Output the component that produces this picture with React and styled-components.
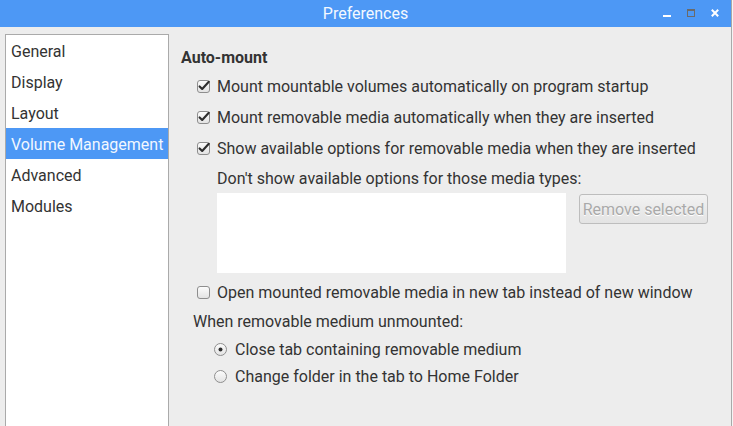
import React from "react";
import styled, { createGlobalStyle } from "styled-components";

const Global = createGlobalStyle`
  html, body { margin: 0; padding: 0; }
  body {
    width: 733px; height: 426px; overflow: hidden;
    background: #f4f4f4;
    font-family: Roboto, "Noto Sans", sans-serif;
  }
`;

const Window = styled.div`
  width: 731px;
  height: 426px;
  display: flex;
  flex-direction: column;
  background: #ededed;
  border-right: 1px solid #a9a9a9;
  overflow: hidden;
`;

const TitleBar = styled.div`
  height: 27px;
  flex: none;
  background: #4d98f5;
  position: relative;
  display: flex;
  align-items: center;
  justify-content: center;
  color: #f4f8ff;
  font-size: 16px;
`;

const Controls = styled.div`
  position: absolute;
  right: 12px;
  top: 9px;
  display: flex;
  align-items: flex-start;
  gap: 16px;
  & > svg { display: block; }
`;

const Body = styled.div`
  flex: 1;
  display: flex;
  padding: 7px 0 0 5px;
  gap: 12px;
  min-height: 0;
`;

const Sidebar = styled.div`
  width: 162px;
  flex: none;
  background: #fff;
  border: 1px solid #aaa;
  border-bottom: none;
  display: flex;
  flex-direction: column;
`;

const SideItem = styled.div`
  height: 31px;
  line-height: 33px;
  padding-left: 5px;
  font-size: 16px;
  color: ${(p) => (p.$active ? "#f2f7ff" : "#333")};
  background: ${(p) => (p.$active ? "#4d98f5" : "transparent")};
  white-space: nowrap;
`;

const Content = styled.div`
  flex: 1;
  display: flex;
  flex-direction: column;
  padding-top: 8px;
  color: #333;
  font-size: 16px;
`;

const Heading = styled.div`
  font-weight: bold;
  height: 29px;
  line-height: 32px;
`;

const Row = styled.div`
  display: flex;
  align-items: center;
  height: ${(p) => p.$h || 31}px;
  padding-left: ${(p) => p.$indent || 0}px;
  gap: ${(p) => p.$gap || 7}px;
  white-space: nowrap;
`;

const Label = styled.div`
  height: ${(p) => p.$h}px;
  line-height: ${(p) => p.$h}px;
  padding-left: ${(p) => p.$indent || 0}px;
  white-space: nowrap;
`;

const ListArea = styled.div`
  display: flex;
  gap: 13px;
  padding-left: 36px;
  align-items: flex-start;
`;

const ListBox = styled.div`
  width: 349px;
  height: 80px;
  background: #fff;
`;

const Button = styled.div`
  width: 127px;
  height: 28px;
  margin-top: 1px;
  border: 1px solid #bdbdbd;
  border-radius: 3px;
  background: linear-gradient(#f2f2f2, #e3e3e3);
  color: #a9a9a9;
  text-shadow: 0 1px 0 #fff;
  font-size: 16px;
  display: flex;
  align-items: center;
  justify-content: center;
  white-space: nowrap;
`;

const Spacer = styled.div`
  height: ${(p) => p.$h}px;
`;

const CheckBox = ({ checked }) => (
  <svg width="13" height="13" viewBox="0 0 13 13">
    <defs>
      <linearGradient id="cbg" x1="0" y1="0" x2="0" y2="1">
        <stop offset="0" stopColor="#fdfdfd" />
        <stop offset="1" stopColor="#e2e2e2" />
      </linearGradient>
    </defs>
    <rect x="0.5" y="0.5" width="12" height="12" rx="2.5" fill="url(#cbg)" stroke="#8e8e8e" />
    {checked && (
      <path d="M2.6 6.4 L5.2 9 L11.8 1.8" fill="none" stroke="#2e2e2e" strokeWidth="2.1" strokeLinecap="round" strokeLinejoin="round" />
    )}
  </svg>
);

const Radio = ({ checked }) => (
  <svg width="13" height="13" viewBox="0 0 13 13">
    <defs>
      <linearGradient id="rbg" x1="0" y1="0" x2="0" y2="1">
        <stop offset="0" stopColor="#fdfdfd" />
        <stop offset="1" stopColor="#e2e2e2" />
      </linearGradient>
    </defs>
    <circle cx="6.5" cy="6.5" r="6" fill="url(#rbg)" stroke="#8e8e8e" />
    {checked && <circle cx="6.5" cy="6.5" r="2" fill="#2e2e2e" />}
  </svg>
);

const items = ["General", "Display", "Layout", "Volume Management", "Advanced", "Modules"];

export default function App() {
  return (
    <>
      <Global />
      <Window>
        <TitleBar>
          Preferences
          <Controls>
            <svg width="8" height="8" viewBox="0 0 8 8">
              <rect x="0" y="6" width="8" height="2" fill="#fff" />
            </svg>
            <svg width="8" height="8" viewBox="0 0 8 8">
              <rect x="0.5" y="0.5" width="7" height="7" fill="none" stroke="#6a6a6a" strokeWidth="1" />
              <rect x="0" y="0" width="8" height="2" fill="#6a6a6a" />
            </svg>
            <svg width="8" height="8" viewBox="0 0 8 8">
              <path d="M0.8 0.8 L7.2 7.2 M7.2 0.8 L0.8 7.2" stroke="#fff" strokeWidth="2" />
            </svg>
          </Controls>
        </TitleBar>
        <Body>
          <Sidebar>
            {items.map((t) => (
              <SideItem key={t} $active={t === "Volume Management"}>
                {t}
              </SideItem>
            ))}
          </Sidebar>
          <Content>
            <Heading>Auto-mount</Heading>
            <Row $indent={16}>
              <CheckBox checked />
              Mount mountable volumes automatically on program startup
            </Row>
            <Row $indent={16}>
              <CheckBox checked />
              Mount removable media automatically when they are inserted
            </Row>
            <Row $indent={16}>
              <CheckBox checked />
              Show available options for removable media when they are inserted
            </Row>
            <Label $indent={36} $h={29}>Don't show available options for those media types:</Label>
            <ListArea>
              <ListBox />
              <Button>Remove selected</Button>
            </ListArea>
            <Spacer $h={4} />
            <Row $indent={16}>
              <CheckBox />
              Open mounted removable media in new tab instead of new window
            </Row>
            <Label $indent={12} $h={28}>When removable medium unmounted:</Label>
            <Row $indent={33} $h={27} $gap={8}>
              <Radio checked />
              Close tab containing removable medium
            </Row>
            <Row $indent={33} $h={27} $gap={8}>
              <Radio />
              Change folder in the tab to Home Folder
            </Row>
          </Content>
        </Body>
      </Window>
    </>
  );
}
